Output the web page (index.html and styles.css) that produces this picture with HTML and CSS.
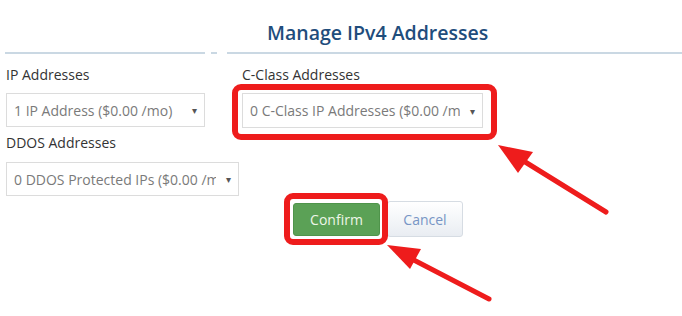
FILE: index.html
```html
<!DOCTYPE html>
<html>
<head>
    <link rel="stylesheet" href="styles.css">
</head>
<body>
    <div class="page">
        <h1 class="title">Manage IPv4 Addresses</h1>
        <div class="rule">
            <span class="rule-left"></span>
            <span class="rule-dash"></span>
            <span class="rule-right"></span>
        </div>

        <div class="form">
            <div class="row">
                <div class="field field-ip">
                    <label>IP Addresses</label>
                    <div class="select">
                        <span class="value">1 IP Address ($0.00 /mo)</span>
                        <span class="caret">&#9662;</span>
                    </div>
                </div>
                <div class="field field-cclass">
                    <label>C-Class Addresses</label>
                    <div class="select">
                        <span class="value">0 C-Class IP Addresses ($0.00 /mo)</span>
                        <span class="caret">&#9662;</span>
                    </div>
                </div>
            </div>

            <div class="field field-ddos">
                <label>DDOS Addresses</label>
                <div class="select">
                    <span class="value">0 DDOS Protected IPs ($0.00 /mo)</span>
                    <span class="caret">&#9662;</span>
                </div>
            </div>

            <div class="actions">
                <button class="btn btn-confirm">Confirm</button>
                <button class="btn btn-cancel">Cancel</button>
            </div>
        </div>

        <!-- red annotation marks drawn over the form -->
        <svg class="marks" width="682" height="316" viewBox="0 0 682 316">
            <rect x="235" y="87" width="259" height="50" rx="6" fill="none" stroke="#ee1c1c" stroke-width="6"/>
            <rect x="287" y="196" width="98" height="46" rx="6" fill="none" stroke="#ee1c1c" stroke-width="6"/>
            <line x1="606" y1="212" x2="522" y2="160" stroke="#ee1c1c" stroke-width="5" stroke-linecap="round"/>
            <polygon points="498,145 533,152 518,173" fill="#ee1c1c"/>
            <line x1="489" y1="299" x2="408" y2="257" stroke="#ee1c1c" stroke-width="5" stroke-linecap="round"/>
            <polygon points="387,245 421,249 410,269" fill="#ee1c1c"/>
        </svg>
    </div>
</body>
</html>
```

FILE: styles.css
```css
body {
    margin: 0;
    padding: 0;
    background-color: white;
    font-family: "Open Sans", "Liberation Sans", sans-serif;
}

.page {
    position: relative;
    width: 682px;
    height: 316px;
    overflow: hidden;
}

.title {
    margin: 0;
    padding: 21px 0 0 267px;
    font-size: 19.5px;
    line-height: 24px;
    font-weight: 600;
    color: #1f4d7c;
}

.rule {
    display: flex;
    margin-top: 7px;
    padding-left: 5px;
    height: 2px;
}

.rule span {
    background-color: #cad8e3;
}

.rule-left {
    width: 200px;
}

.rule-dash {
    width: 6px;
    margin-left: 6px;
}

.rule-right {
    flex: 1;
    margin-left: 10px;
}

.form {
    padding-left: 6px;
    margin-top: 12px;
}

.row {
    display: flex;
}

.field label {
    display: block;
    font-size: 14px;
    line-height: 18px;
    color: #333;
}

.field-ip {
    width: 199px;
    margin-right: 37px;
}

.field-cclass {
    width: 241px;
}

.field-ddos {
    width: 233px;
    margin-top: 6px;
}

.field-ddos label {
    margin-bottom: 10px;
}

.field-ip label,
.field-cclass label {
    margin-bottom: 9px;
}

.select {
    display: flex;
    align-items: center;
    box-sizing: border-box;
    height: 34px;
    padding: 0 7px 0 7px;
    border: 1px solid #dcdcdc;
    background-color: white;
    font-size: 14px;
    color: #7a7a7a;
}

.field-cclass .select {
    height: 35px;
}

.select .value {
    flex: 1;
    overflow: hidden;
    white-space: nowrap;
}

.select .caret {
    margin-left: 10px;
    font-size: 10px;
    color: #555;
}

.actions {
    display: flex;
    align-items: center;
    margin-top: 5px;
    padding-left: 287px;
}

.btn {
    font-family: "Open Sans", "Liberation Sans", sans-serif;
    font-size: 14px;
    border-radius: 3px;
    cursor: pointer;
}

.btn-confirm {
    width: 87px;
    height: 33px;
    border: 1px solid #4f944b;
    background-color: #5ba156;
    color: #eef6e8;
}

.btn-cancel {
    width: 76px;
    height: 36px;
    margin-left: 7px;
    border: 1px solid #d6dce3;
    background: linear-gradient(#ffffff, #e9edf2);
    color: #7895c5;
}

.marks {
    position: absolute;
    top: 0;
    left: 0;
}
```
